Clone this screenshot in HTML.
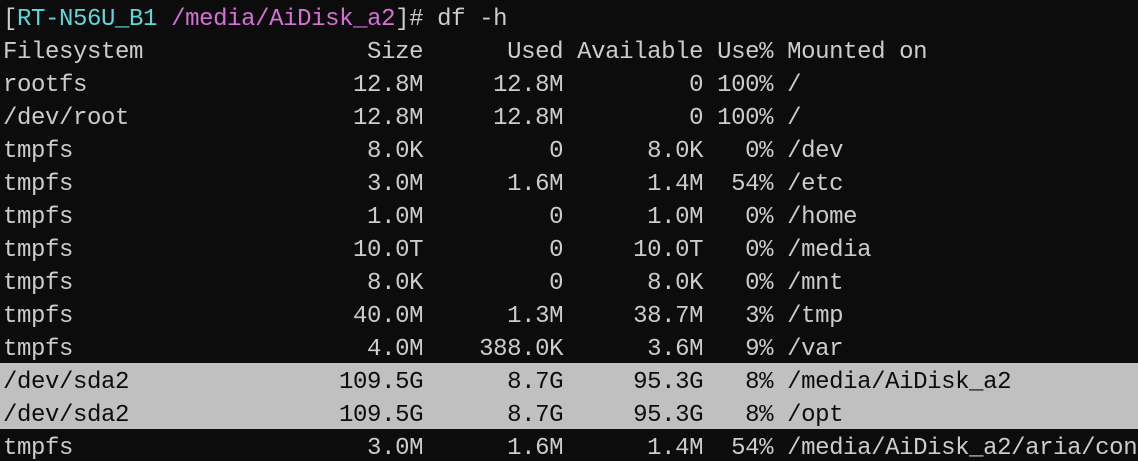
<!DOCTYPE html>
<html><head><style>
html,body{margin:0;padding:0;background:#0c0c0c;width:1138px;height:461px;overflow:hidden}
pre{margin:0;padding:0 0 0 3px;font-family:"Liberation Mono",monospace;font-size:24px;letter-spacing:-0.4px;line-height:39px;color:#cccccc;white-space:pre}
.r{height:33px;display:block;overflow:visible}
.sel{background:#c0c0c0;color:#0c0c0c;margin-left:-3px;padding-left:3px}
.c{color:#61d6d6}.m{color:#d670d6}
</style></head><body><pre><div class="r">[<span class="c">RT-N56U_B1</span> <span class="m">/media/AiDisk_a2</span>]# df -h</div><div class="r">Filesystem                Size      Used Available Use% Mounted on</div><div class="r">rootfs                   12.8M     12.8M         0 100% /</div><div class="r">/dev/root                12.8M     12.8M         0 100% /</div><div class="r">tmpfs                     8.0K         0      8.0K   0% /dev</div><div class="r">tmpfs                     3.0M      1.6M      1.4M  54% /etc</div><div class="r">tmpfs                     1.0M         0      1.0M   0% /home</div><div class="r">tmpfs                    10.0T         0     10.0T   0% /media</div><div class="r">tmpfs                     8.0K         0      8.0K   0% /mnt</div><div class="r">tmpfs                    40.0M      1.3M     38.7M   3% /tmp</div><div class="r">tmpfs                     4.0M    388.0K      3.6M   9% /var</div><div class="r sel">/dev/sda2               109.5G      8.7G     95.3G   8% /media/AiDisk_a2            </div><div class="r sel">/dev/sda2               109.5G      8.7G     95.3G   8% /opt                        </div><div class="r">tmpfs                     3.0M      1.6M      1.4M  54% /media/AiDisk_a2/aria/config</div></pre></body></html>
